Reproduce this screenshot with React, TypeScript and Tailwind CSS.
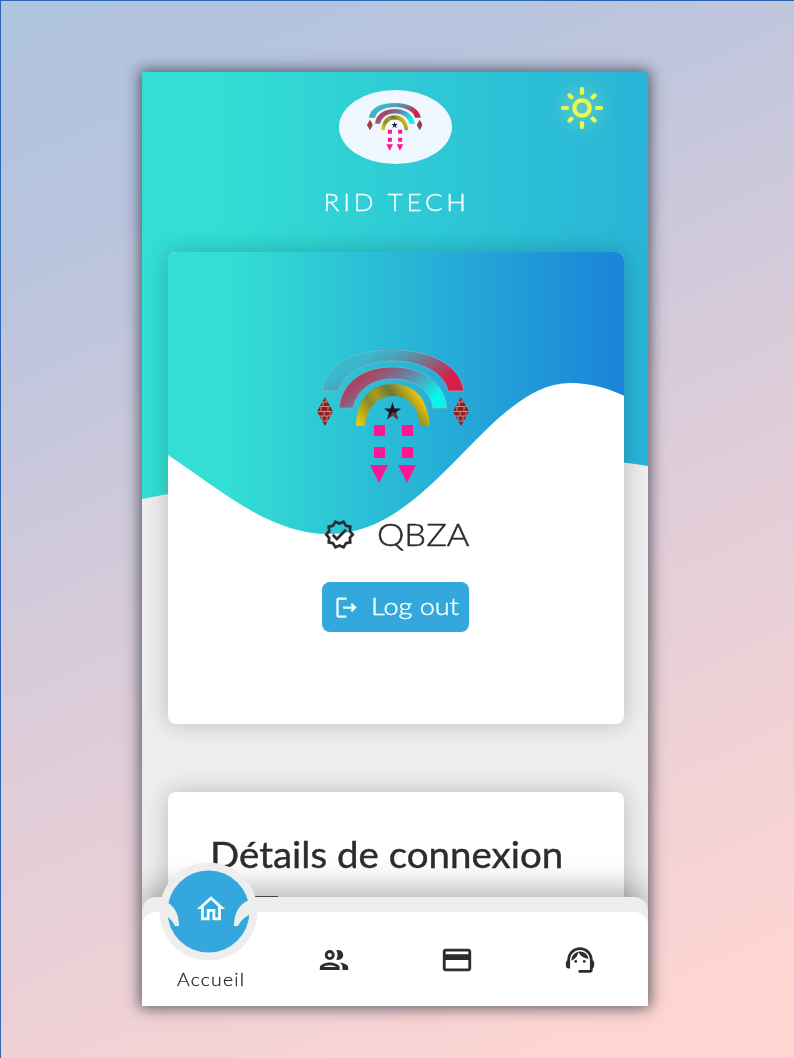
import React from "react";
import {
  MdCreditCard,
  MdOutlineGroup,
  MdOutlineHome,
  MdOutlineLogout,
  MdOutlineSupportAgent,
  MdOutlineVerified,
} from "react-icons/md";

function Brick({ x, id }: { x: number; id: string }) {
  return (
    <g transform={`translate(${x} 47)`}>
      <clipPath id={id}>
        <path d="M8 0 16 14.500 8 29 0 14.500Z" />
      </clipPath>
      <g clipPath={`url(#${id})`}>
        <rect width="16" height="29" fill="#8e1d20" />
        <path
          d="M0 5h16M0 9.500h16M0 14.500h16M0 19h16M0 24h16M9 0v5M6 5v4.500M11 9.500v5M4 9.500v5M7 14.500V19M13 14.500V19M10 19v5M5 19v5"
          stroke="#c9a9a2"
          strokeWidth=".8"
        />
      </g>
    </g>
  );
}

function Logo({ name, className }: { name: string; className: string }) {
  return (
    <svg viewBox="0 0 153 134" preserveAspectRatio="none" className={className} fill="none">
      <defs>
        <linearGradient id={name + "a"} x1="0" y1="0" x2="1" y2=".45">
          <stop offset="0" stopColor="#4ba9b8" />
          <stop offset=".3" stopColor="#35bccd" />
          <stop offset=".58" stopColor="#5a91aa" />
          <stop offset="1" stopColor="#d51f49" />
        </linearGradient>
        <linearGradient id={name + "b"} x1="0" y1="0" x2="1" y2=".5">
          <stop offset="0" stopColor="#795779" />
          <stop offset=".3" stopColor="#a94564" />
          <stop offset=".6" stopColor="#6685a6" />
          <stop offset="1" stopColor="#08f5ee" />
        </linearGradient>
        <linearGradient id={name + "c"} x1="0" y1="1" x2="1" y2="0.6">
          <stop offset="0" stopColor="#f9d204" />
          <stop offset=".35" stopColor="#8a8a2c" />
          <stop offset=".5" stopColor="#a69a24" />
          <stop offset=".68" stopColor="#6f7638" />
          <stop offset="1" stopColor="#f1ca08" />
        </linearGradient>
      </defs>
      <path
        d="M5 41C9 13 38 0 76 0s67 15 71 41h-16C128 23 104 11 76 11S25 23 22 41Z"
        fill={`url(#${name}a)`}
        stroke="#8fb6c7"
        strokeWidth=".6"
      />
      <path
        d="M22 58C25 31 47 17 76 17s52 16 54 41h-14C113 41 99 29 76 29S40 41 36 58Z"
        fill={`url(#${name}b)`}
        stroke="#9bb2c1"
        strokeWidth=".6"
      />
      <path
        d="M39 76C40 49 53 34 76 34s35 16 37 42h-10C101 57 92 46 76 46S50 58 48 76Z"
        fill={`url(#${name}c)`}
      />
      <Brick x={0} id={name + "d"} />
      <Brick x={136} id={name + "e"} />
      <path d="m75.500 52 2 6.500h6.500l-5 4 2 7-5.500-4-5.500 4 2-7-5-4h6.500Z" fill="#1c1620" />
      <path d="m76 62 3 2 1 5-5-4-5 4Z" fill="#90293c" />
      <path
        d="M57 75h11v11H57zM85 75h11v11H85zM57 97h11v11H57zM85 97h11v11H85zM53 115h18l-9 18ZM81 115h18l-9 18Z"
        fill="#ff1493"
      />
    </svg>
  );
}

function Sun() {
  return (
    <svg
      viewBox="0 0 42 42"
      className="h-[42px] w-[42px] drop-shadow-[0_0_10px_rgba(240,255,140,0.65)]"
      fill="none"
      stroke="#eef94f"
      strokeWidth="4.2"
      strokeLinecap="round"
    >
      <circle cx="21" cy="21" r="7.700" />
      <path d="M21 2v4M21 36v4M2 21h4M36 21h4M8.500 8.500l1.800 1.800M31.700 31.700l1.800 1.800M8.500 33.500l1.800-1.800M31.700 10.300l1.800-1.800" />
    </svg>
  );
}

function NavItem({ children }: { children: React.ReactNode }) {
  return (
    <button className="flex h-24 w-[123px] items-center justify-center text-[34px] text-[#2d2d2d]">
      {children}
    </button>
  );
}

export default function App() {
  return (
    <div className="h-[1058px] w-[794px] border-t border-l border-[#2b66b5] bg-[linear-gradient(155deg,#b0c4de_0%,#b8c4de_18%,#dcccd9_52%,#ffd5d2_94%)] pt-[71px] pl-[141px] font-[Lato,sans-serif] text-[#2d2d2d]">
      <main className="relative h-[934px] w-[506px] bg-[#eee] shadow-[0_0_14px_2px_rgba(40,50,60,0.75)]">
        <div className="relative h-full overflow-hidden">
          <svg className="absolute inset-0 h-[440px] w-full" viewBox="0 0 506 440">
            <defs>
              <linearGradient id="header">
                <stop offset=".15" stopColor="#33ded4" />
                <stop offset=".6" stopColor="#2dc7d6" />
                <stop offset="1" stopColor="#28b4d8" />
              </linearGradient>
            </defs>
            <path d="M0 0H506V394C400 375 200 387 0 427Z" fill="url(#header)" />
          </svg>

          <header className="relative flex h-[180px] flex-col items-center pt-[18px]">
            <div className="flex h-[74px] w-[113px] items-center justify-center rounded-[50%] bg-[#f0f8ff]">
              <Logo name="small" className="h-[48px] w-[56px]" />
            </div>
            <h1 className="mt-6 ml-[3px] origin-center scale-x-[1.13] text-[23px] leading-7 font-light tracking-[3.4px] text-[#f0ffff] [-webkit-text-stroke:0.4px_#f0ffff]">
              RID TECH
            </h1>
            <button className="absolute top-[15px] left-[419px]">
              <Sun />
            </button>
          </header>

          <section className="relative ml-[25.500px] flex h-[472px] w-[456.500px] flex-col items-center overflow-hidden rounded-lg bg-white pt-[98px]">
            <svg
              className="absolute top-0 left-0 h-[290px] w-full"
              viewBox="0 0 456 290"
              preserveAspectRatio="none"
            >
              <defs>
                <linearGradient id="profile">
                  <stop offset=".14" stopColor="#33ded4" />
                  <stop offset=".57" stopColor="#27b1d7" />
                  <stop offset="1" stopColor="#1b83d9" />
                </linearGradient>
              </defs>
              <path
                d="M0 0H456V144C439 136 422 131 402 131C320 131 265 281 162 282C102 283 50 236 0 203Z"
                fill="url(#profile)"
              />
            </svg>
            <Logo name="large" className="relative ml-[-5px] h-[134px] w-[153px]" />
            <div className="relative mt-[30px] flex h-10 w-[146px] items-center justify-between">
              <MdOutlineVerified className="h-[33px] w-[33px]" />
              <h2 className="w-[92px] text-[32px] leading-10 font-light [-webkit-text-stroke:0.5px_#2d2d2d]">
                <span className="inline-block origin-left scale-x-[1.08]">QBZA</span>
              </h2>
            </div>
            <button className="relative mt-7 flex h-[50px] w-[147px] items-center rounded-lg bg-[#34a8dc] pl-[11px] text-2xl text-[#f0ffff]">
              <MdOutlineLogout className="mr-[11px] h-[27px] w-[27px] shrink-0" />
              <span className="-mt-0.5 inline-block origin-left scale-x-[1.13] font-light whitespace-nowrap [-webkit-text-stroke:0.45px_#f0ffff]">
                Log out
              </span>
            </button>
          </section>

          <section className="relative mt-[67.500px] ml-[25.500px] h-[240px] w-[456.500px] rounded-lg bg-white px-[42px] pt-10 shadow-[0_0_24px_rgba(0,0,0,0.22)]">
            <h2 className="-mt-0.5 origin-left scale-x-[1.04] text-[37px] leading-[48px] font-normal whitespace-nowrap [-webkit-text-stroke:0.4px_#2d2d2d]">
              Détails de connexion
            </h2>
            <hr className="mt-[18px] w-[68px] border-t-2 border-[#555]" />
          </section>
        </div>

        <div className="pointer-events-none absolute top-[180px] left-[25.500px] h-[472px] w-[456.500px] rounded-lg shadow-[0_0_24px_rgba(0,0,0,0.22)]" />

        <nav className="absolute bottom-0 left-0 h-[109px] w-full rounded-t-[14px] bg-[#eee] pt-[15px] shadow-[0_-10px_28px_rgba(0,0,0,0.28)] [clip-path:inset(-60px_0_0_0)]">
          <div className="flex h-[94px] rounded-t-[14px] bg-white">
            <div className="flex w-[130.500px] items-end pb-[14px] pl-[35px]">
              <span className="origin-left scale-x-[1.1] text-[17.600px] leading-6 font-light tracking-[1.1px] [-webkit-text-stroke:0.3px_#2d2d2d]">
                Accueil
              </span>
            </div>
            <div className="flex">
              <NavItem><MdOutlineGroup /></NavItem>
              <NavItem><MdCreditCard /></NavItem>
              <NavItem><MdOutlineSupportAgent /></NavItem>
            </div>
          </div>
          <div className="absolute top-[-36px] left-[16px] h-[101px] w-[101px]">
            <svg viewBox="0 0 101 101" className="h-full w-full">
              <circle cx="50.500" cy="50.500" r="49" fill="#eee" />
              <circle cx="50.500" cy="50.500" r="41" fill="#34a8dc" />
              <path d="M7 40C16 44 21 53 21 65h-4C15 61 12 57 7 54Z" fill="#eee" />
              <path d="M94 38C83 41 76 50 76 65h4C83 59 87 56 94 52Z" fill="#eee" />
            </svg>
            <MdOutlineHome className="absolute top-[31px] left-[36px] h-[34px] w-[34px] text-[#f0ffff]" />
          </div>
        </nav>
      </main>
    </div>
  );
}
